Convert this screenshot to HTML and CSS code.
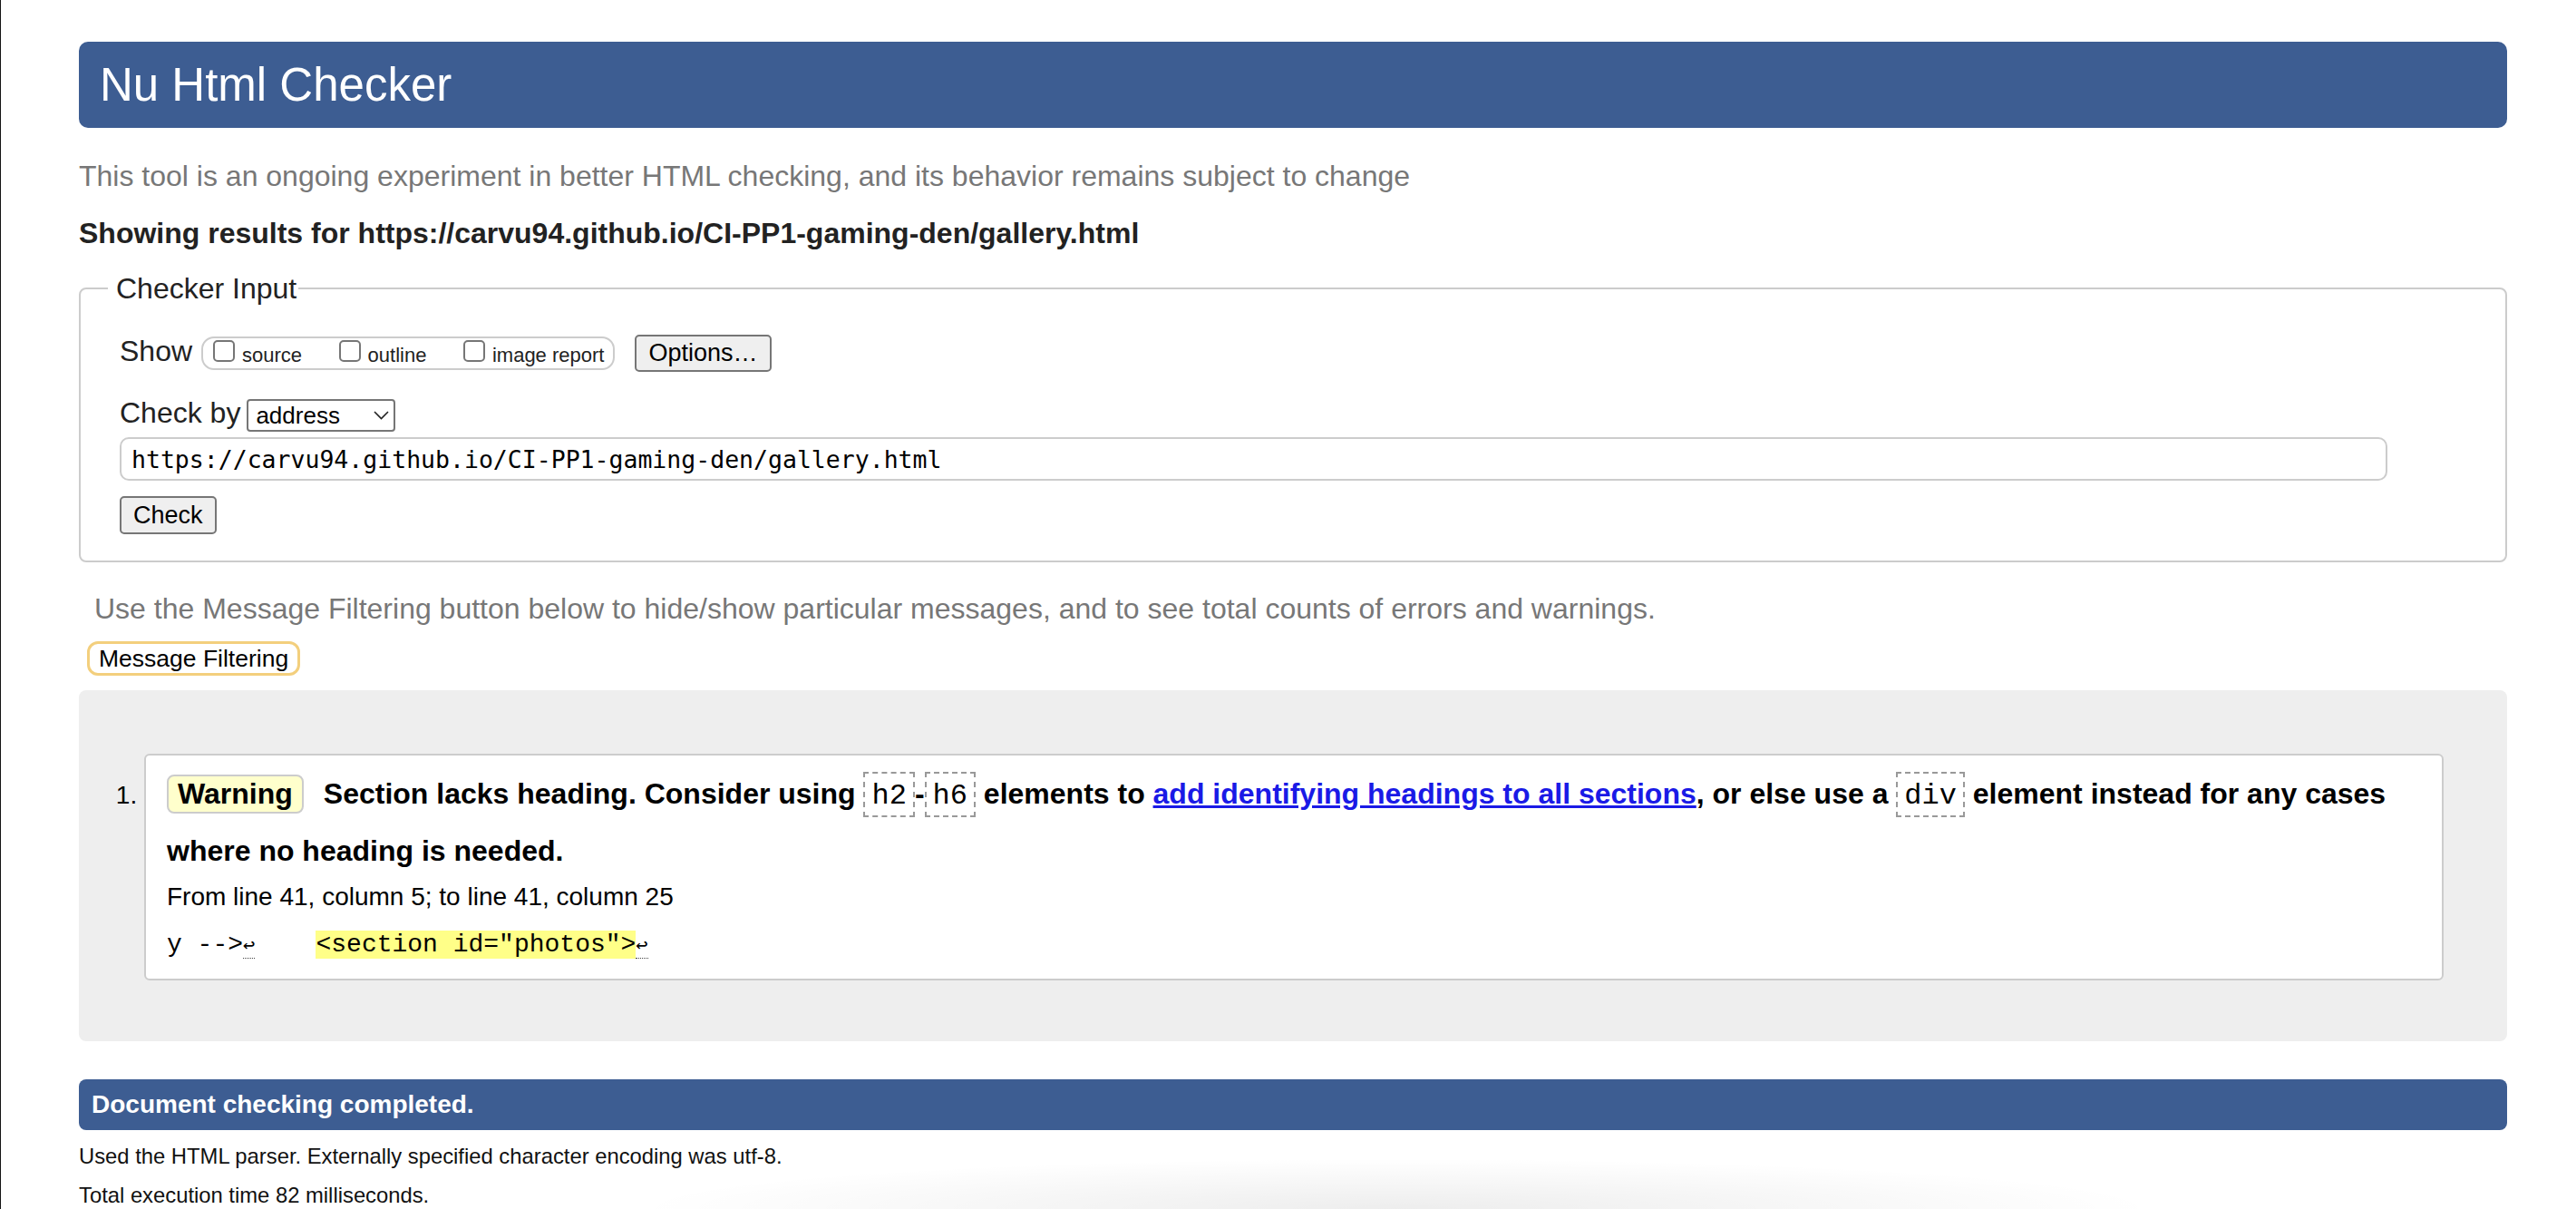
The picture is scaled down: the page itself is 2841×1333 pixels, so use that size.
FILE: index.html
```html
<!DOCTYPE html>
<html lang="en">
<head>
<meta charset="utf-8">
<title>Showing results for https://carvu94.github.io/CI-PP1-gaming-den/gallery.html - Nu Html Checker</title>
<link rel="stylesheet" href="styles.css">
</head>
<body>
<div class="page">
  <h1 class="title">Nu Html Checker</h1>
  <p class="intro">This tool is an ongoing experiment in better HTML checking, and its behavior remains subject to change</p>
  <p class="results-for">Showing results for https://carvu94.github.io/CI-PP1-gaming-den/gallery.html</p>
  <form class="checker-form" onsubmit="return false">
    <fieldset class="checker-input">
      <legend>Checker Input</legend>
      <div class="fs-body">
        <div class="row row-show">
          <span class="row-label">Show</span>
          <span class="show-group">
            <label class="opt"><input type="checkbox" class="cb"><span class="opt-text">source</span></label>
            <label class="opt"><input type="checkbox" class="cb"><span class="opt-text">outline</span></label>
            <label class="opt"><input type="checkbox" class="cb"><span class="opt-text">image report</span></label>
          </span>
          <button type="button" class="btn btn-options">Options…</button>
        </div>
        <div class="row row-by">
          <span class="row-label">Check by</span>
          <span class="select-wrap">
            <select class="select"><option>address</option></select>
            <svg class="chev" width="17" height="10" viewBox="0 0 17 10"><polyline points="1,1 8.5,8.6 16,1" fill="none" stroke="#222" stroke-width="1.6"/></svg>
          </span>
        </div>
        <input class="url" type="text" value="https://carvu94.github.io/CI-PP1-gaming-den/gallery.html">
        <div class="row row-check"><button type="button" class="btn btn-check">Check</button></div>
      </div>
    </fieldset>
  </form>
  <p class="filter-note">Use the Message Filtering button below to hide/show particular messages, and to see total counts of errors and warnings.</p>
  <button type="button" class="btn-filter">Message Filtering</button>
  <div class="results">
    <ol class="msgs">
      <li class="msg">
        <p class="msg-text"><strong class="badge">Warning</strong><span class="msg-body">Section lacks heading. Consider using <code class="chip">h2</code>-<code class="chip">h6</code> elements to <a href="#" class="ref">add identifying headings to all sections</a>, or else use a <code class="chip">div</code> element instead for any cases where no heading is needed.</span></p>
        <p class="location">From line 41, column 5; to line 41, column 25</p>
        <p class="extract"><code>y --&gt;<b class="lf">↩</b>    <mark class="hl">&lt;section id="photos"&gt;</mark><b class="lf">↩</b></code></p>
      </li>
    </ol>
  </div>
  <p class="done">Document checking completed.</p>
  <p class="details first">Used the HTML parser. Externally specified character encoding was utf-8.</p>
  <p class="details">Total execution time 82 milliseconds.</p>
</div>
<div class="shade"></div>
</body>
</html>
```

FILE: styles.css
```css
* { box-sizing: border-box; }
html, body { margin: 0; height: 100%; overflow: hidden; background: #fff; }
body {
  border-left: 1px solid #151515;
  font-family: "Liberation Sans", Arial, Helvetica, sans-serif;
  color: #222;
  position: relative;
}
.page { padding: 46px 76px 0 86px; }

.title {
  margin: 0;
  height: 95px;
  line-height: 95px;
  padding-left: 23px;
  background: #3d5d92;
  color: #fff;
  font-size: 51px;
  font-weight: normal;
  border-radius: 10px;
}
.intro {
  margin: 34px 0 0;
  font-size: 32px;
  line-height: 38.4px;
  color: #777;
}
.results-for {
  margin: 25px 0 0;
  font-size: 32px;
  line-height: 38px;
  font-weight: bold;
  color: #222;
}

.checker-form { margin: 24.7px 0 0; }
.checker-input {
  margin: 0;
  min-width: 0;
  border: 2px solid #ccc;
  border-radius: 8px;
  padding: 34px 0 29px 30px;
}
.checker-input legend {
  padding: 0 2px 0 9px;
  font-size: 32px;
  line-height: 34px;
  color: #222;
}
.fs-body { padding-left: 13px; }
.row { display: flex; align-items: center; }
.row-label {
  font-size: 32px;
  line-height: 30px;
  padding-bottom: 6px;
  color: #222;
}
.show-group {
  display: flex;
  align-items: center;
  height: 37px;
  margin-left: 10px;
  padding: 0 10px 0 11px;
  border: 2px solid #ccc;
  border-radius: 14px;
  gap: 40.5px;
}
.opt {
  display: flex;
  align-items: flex-end;
  font-size: 22px;
  line-height: 25px;
  color: #222;
}
.cb {
  appearance: none;
  -webkit-appearance: none;
  width: 24px;
  height: 24px;
  margin: 0 8px 5px 0;
  border: 2px solid #767676;
  border-radius: 5px;
  background: #fff;
}
.btn {
  font-family: "Liberation Sans", Arial, sans-serif;
  font-size: 27px;
  color: #000;
  background: #efefef;
  border: 2px solid #767676;
  border-radius: 5px;
  padding: 0 13px;
}
.btn-options { height: 41px; margin-left: 22px; }
.row-by { margin-top: 30px; }
.select-wrap {
  position: relative;
  margin-left: 7px;
  display: inline-block;
}
.select {
  appearance: none;
  -webkit-appearance: none;
  width: 164px;
  height: 36px;
  border: 2px solid #767676;
  border-radius: 4px;
  background: #fff;
  color: #000;
  font-family: "Liberation Sans", Arial, sans-serif;
  font-size: 26px;
  padding: 0 0 0 8px;
  display: block;
}
.chev {
  position: absolute;
  left: 140px;
  top: 13px;
  pointer-events: none;
}
.url {
  display: block;
  margin-top: 6px;
  width: 2501px;
  height: 48px;
  border: 2px solid #ccc;
  border-radius: 10px;
  padding: 0 11px;
  font-family: "DejaVu Sans Mono", "Liberation Mono", monospace;
  font-size: 26.5px;
  color: #000;
  background: #fff;
}
.row-check { margin-top: 17px; }
.btn-check { height: 42px; }

.filter-note {
  margin: 31.7px 0 0 17px;
  font-size: 32px;
  line-height: 38.4px;
  color: #777;
}
.btn-filter {
  display: block;
  margin: 17px 0 0 9px;
  height: 38px;
  padding: 0 10px;
  border: 3px solid #f3cf7d;
  border-radius: 12px;
  background: #fff;
  font-family: "Liberation Sans", Arial, sans-serif;
  font-size: 26.5px;
  color: #000;
}

.results {
  margin-top: 16px;
  background: #eee;
  border-radius: 8px;
  padding: 70px 70px 67px 72px;
}
.msgs { margin: 0; padding: 0; list-style: decimal outside; }
.msg {
  font-size: 28px;
  color: #000;
  background: #fff;
  border: 2px solid #ccc;
  border-radius: 6px;
  padding: 12px 23px 15px;
}
.msg-text {
  margin: 0;
  font-size: 32px;
  font-weight: bold;
  line-height: 61px;
}
.badge {
  display: inline-block;
  line-height: 39px;
  padding: 0 10px;
  margin-right: 22px;
  border: 2px solid #ccc;
  border-radius: 8px;
  background: #ffffcc;
}
.chip {
  font-family: "Liberation Mono", "Courier New", monospace;
  font-size: 32px;
  font-weight: normal;
  padding: 6px 7px 2.5px;
  border: 2px dashed #999;
}
.ref { color: #1a1ae6; text-decoration: underline; }
.location {
  margin: 0;
  font-size: 28px;
  line-height: 40px;
}
.extract {
  margin: 12.5px 0 0;
  font-family: "Liberation Mono", "Courier New", monospace;
  font-size: 28px;
  line-height: 40px;
  white-space: pre;
}
.extract code { font-family: inherit; font-size: inherit; }
.hl { background: #ffff88; color: #000; }
.lf {
  font-weight: normal;
  font-size: 22px;
  border-bottom: 1px dotted #444;
}

.done {
  margin: 42px 0 0;
  height: 56px;
  line-height: 56px;
  padding-left: 14px;
  background: #3d5d92;
  color: #fff;
  font-size: 28px;
  font-weight: bold;
  border-radius: 8px;
}
.details {
  margin: 0;
  font-size: 23.8px;
  line-height: 43px;
  color: #111;
}
.details.first { margin-top: 7px; }

.shade {
  position: absolute;
  left: 700px;
  width: 1680px;
  bottom: 0;
  height: 56px;
  background: radial-gradient(ellipse 50% 100% at 50% 100%, rgba(0,0,0,0.07), rgba(0,0,0,0));
  pointer-events: none;
}
```
